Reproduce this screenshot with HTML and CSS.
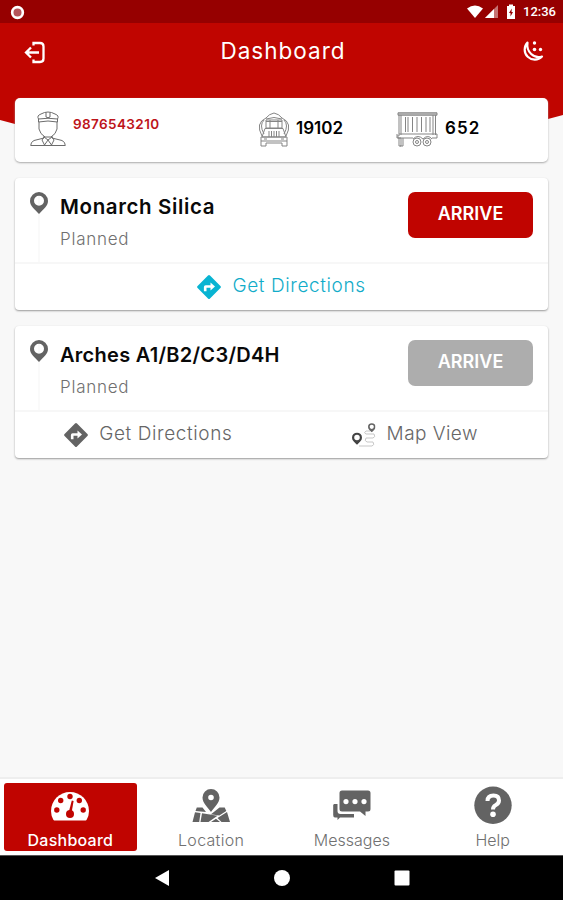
FILE: index.html
```html
<!DOCTYPE html>
<html lang="en">
<head>
<meta charset="utf-8">
<meta name="viewport" content="width=device-width, initial-scale=1">
<title>Dashboard</title>
<link rel="stylesheet" href="styles.css">
</head>
<body>
<svg width="0" height="0" class="defs" aria-hidden="true">
  <symbol id="pin" viewBox="0 0 18 22"><path fill-rule="evenodd" d="M9 0a9 9 0 0 0-9 9c0 5 4.500 8 9 13 4.500-5 9-8 9-13a9 9 0 0 0-9-9Zm0 3.800a5 5 0 1 1 0 10 5 5 0 0 1 0-10Z"/></symbol>
  <symbol id="turn" viewBox="0 0 24 24"><path fill-rule="evenodd" d="M11 .6.6 11a1.400 1.400 0 0 0 0 2L11 23.400a1.400 1.400 0 0 0 2 0L23.400 13a1.400 1.400 0 0 0 0-2L13 .6a1.400 1.400 0 0 0-2 0ZM13.500 15.500V12.800H9.500v3.500h-2.600V12q0-1.800 1.800-1.800h4.800V7.500l4.500 4Z"/></symbol>
</svg>
<main class="app">
  <header class="top">
    <div class="status">
      <svg class="record" viewBox="0 0 16 16"><circle cx="8" cy="8" r="5.700" fill="#b5545a" stroke="#fff" stroke-width="2.800"/></svg>
      <svg class="signals" viewBox="0 0 50 16" fill="#fff">
        <path d="M0 4.500Q8-1.500 16 4.500L8 14Z"/>
        <path d="M31 1v13H18Z" opacity=".45"/><path d="M27 5v9H18Z"/>
        <path fill-rule="evenodd" d="M40 2h2V.5h4V2h2v13h-8Zm4.800 2.500L42 9h1.500v3.500L46 8h-1.500Z"/>
      </svg>
      <span class="clock">12:36</span>
    </div>
    <div class="titlebar">
      <svg class="exit" viewBox="0 0 22 23" fill="none" stroke="#fff" stroke-width="2.300"><path d="M9.500 4.500V2H16q3.500 0 3.500 3.500v12q0 3.500-3.500 3.500H9.500V18.500M2 11.500h13M7 6.500l-5 5 5 5"/></svg>
      <h1>Dashboard</h1>
      <svg class="moon" viewBox="0 0 24 24" fill="none" stroke="#fff" stroke-width="2.200"><path d="M7.500 2.500A10 10 0 1 0 22 16.500C14 19 6 12 7.500 2.500Z" stroke-linejoin="round"/><g fill="#fff" stroke="none"><circle cx="14.500" cy="3" r="1.700"/><circle cx="14.500" cy="9.500" r="1.800"/><circle cx="20.500" cy="9.500" r="1.700"/></g></svg>
    </div>
    <section class="summary">
      <svg class="driver" viewBox="0 0 36 36" fill="none" stroke="#6c6c6c" stroke-width="1">
        <path d="M8.500 8Q6.500 4.500 11 3 18-1 25 3q4.500 1.500 2.500 5M8.500 8q9.500-1.500 19 0v3q-9.500-2-19 0ZM16 1.500v4.500q2 1.500 4 0V1.500M9 11v7q1 5 6 8h6q5-3 6-8v-7M14 25v2L4 29.500Q.7 31 .7 34.500h34.600Q35.300 31 32 29.500L22 27v-2M14 26l-2 3 2.500 5 3.500-5 3.500 5 2.500-5-2-3-4 3Z"/>
      </svg>
      <span class="phone">9876543210</span>
      <svg class="truck" viewBox="0 0 30 35" fill="none" stroke="#858585" stroke-width="1">
        <path d="M3 24Q-4 11 7 6q3-4 8-5 5 1 8 5 11 5 4 18M5 22Q0 13 5 8M25 22q5-9 0-14M7 7q8-3 16 0M7 8h16v8H7ZM11 8v8M19 8v8M7 9.500h16M6 16.500h18l3 8.500H3ZM10 19v6M12.500 19v6M15 19v6M17.500 19v6M20 19v6M2 25h26v4H2ZM2 29v5h5v-3h16v3h5v-5M5 27h3M22 27h3"/>
      </svg>
      <span class="number truck-no">19102</span>
      <svg class="trailer" viewBox="0 0 42 35" fill="none" stroke="#858585" stroke-width="1">
        <path d="M2 .8h39v2.400H2Z" fill="#bbb"/><path d="M3 3v21M5 3v20M9.500 5v15M12 5v15M16.500 5v15M21 5v15M25.500 5v15M30 5v15M34 5v15M37 3v20M39.500 3v20M3 22h38v4h-5M17 26H2v-3M1 22v4h4v8H3v-8M7 26v8H4M17 27q5-5 10 0 5-5 9 0"/><circle cx="21" cy="30" r="4"/><circle cx="21" cy="30" r="1.500"/><circle cx="31" cy="30" r="4"/><circle cx="31" cy="30" r="1.500"/>
      </svg>
      <span class="number trailer-no">652</span>
    </section>
  </header>

  <section class="stops">
    <article class="stop">
      <div class="details">
        <div class="rail"><svg class="pin"><use href="#pin"/></svg></div>
        <div class="place"><h2 class="silica">Monarch Silica</h2><p>Planned</p></div>
        <button class="arrive">ARRIVE</button>
      </div>
      <div class="actions single">
        <a class="action"><svg class="turn"><use href="#turn"/></svg><span class="directions">Get Directions</span></a>
      </div>
    </article>
    <article class="stop">
      <div class="details">
        <div class="rail"><svg class="pin"><use href="#pin"/></svg></div>
        <div class="place"><h2 class="arches">Arches A1/B2/C3/D4H</h2><p>Planned</p></div>
        <button class="arrive disabled">ARRIVE</button>
      </div>
      <div class="actions">
        <a class="action"><svg class="turn"><use href="#turn"/></svg><span class="directions">Get Directions</span></a>
        <a class="action map"><svg class="route" viewBox="0 0 24 24"><path d="M7 23h13q3-1 1-4h-6q-3-1-1-4h7q3-1 1-4h-8q-3-1 0-3h4" fill="none" stroke="#c7c7c7"/><use href="#pin" x="0" y="9" width="10" height="13.500" fill="#444"/><use href="#pin" x="16" y="0" width="7.500" height="9.500"/></svg><span class="mapview">Map View</span></a>
      </div>
    </article>
  </section>

  <nav class="tabs">
    <a class="tab active">
      <svg viewBox="0 0 40 38"><path d="M3.500 34Q1 30 1 25a19 19 0 0 1 38 0q0 5-2.500 9-.5.500-2 .5h-29q-1.500 0-2-.5Z" fill="#fff"/><g fill="#c00400"><circle cx="6.800" cy="24" r="2.700"/><circle cx="10.700" cy="14.500" r="2.700"/><circle cx="20" cy="10.500" r="2.700"/><circle cx="29.300" cy="14.500" r="2.700"/><circle cx="33.200" cy="24" r="2.700"/><circle cx="20" cy="28" r="4"/><path d="m18.800 26 3-11.500 1.800.5-2 11.500Z"/></g></svg>
      <span class="t-dash">Dashboard</span>
    </a>
    <a class="tab">
      <svg viewBox="0 0 40 38"><path fill-rule="evenodd" d="M20 3a8.500 8.500 0 0 0-8.500 8.500c0 5.500 5.200 9.500 8.500 14.500 3.300-5 8.500-9 8.500-14.500A8.500 8.500 0 0 0 20 3Zm0 5.700a2.800 2.800 0 1 1 0 5.600 2.800 2.800 0 0 1 0-5.600Z"/><path d="M5.800 21.500h5.700l3.500 4.500-10.500-1ZM28.500 21.500h5.200l1.600 3.500-7 4.500-14-2 5.700.8ZM4 26.300l5.500.7-1.300 9H1.500ZM11 27.200l15.500 2.600-9 6.200h-8ZM36 26l3 10h-8.500l-4-4ZM25 32.700l4 3.300h-9Z"/></svg>
      <span class="t-loc">Location</span>
    </a>
    <a class="tab">
      <svg viewBox="0 0 40 38"><path fill-rule="evenodd" d="M10 4.500h26q2.500 0 2.500 2.500v16q0 2.500-2.500 2.500h-2.500V30L28 25.500H10Q7.500 25.500 7.500 23V7q0-2.500 2.500-2.500Zm4 8.500a2.600 2.600 0 1 0 0 5.200 2.600 2.600 0 0 0 0-5.200Zm9 0a2.600 2.600 0 1 0 0 5.200 2.600 2.600 0 0 0 0-5.200Zm9 0a2.600 2.600 0 1 0 0 5.200 2.600 2.600 0 0 0 0-5.200Z"/><path d="M2 18h3.500v7q0 3 3 3H22v3.500H8L5.500 34v-2.500H3Q1.200 31.500 1.200 29V19Z"/></svg>
      <span class="t-msg">Messages</span>
    </a>
    <a class="tab">
      <svg viewBox="0 0 40 38"><circle cx="20" cy="19.300" r="18.700"/><path d="M14.500 15q0-5.500 6-5.500 5.500 0 5.500 5 0 3-3.500 4.700-2.500 1.200-2.500 4.300" fill="none" stroke="#fff" stroke-width="4"/><circle cx="20" cy="28.300" r="2.800" fill="#fff"/></svg>
      <span class="t-help">Help</span>
    </a>
  </nav>
  <footer class="system">
    <svg viewBox="0 0 16 16"><path d="M15 0v16L1 8Z"/></svg>
    <svg viewBox="0 0 16 16"><circle cx="8" cy="8" r="8"/></svg>
    <svg viewBox="0 0 16 16"><rect x=".5" y=".5" width="15" height="15" rx="1"/></svg>
  </footer>
</main>
</body>
</html>
```
FILE: styles.css
```css
* { box-sizing: border-box; margin: 0; }
body { font-family: Inter, "Liberation Sans", sans-serif; background: #f8f8f8; }
svg { display: block; flex: none; }
.defs { position: absolute; }
.app { display: flex; flex-direction: column; height: 900px; width: 563px; overflow: hidden; }
span, h1, h2, p { white-space: nowrap; }

.top { position: relative; height: 162px; display: flex; flex-direction: column; }
.top::before { content: ""; position: absolute; inset: 0; z-index: -1; background: #c00500; clip-path: polygon(0 0, 100% 0, 100% 115px, 548px 119px, 500px 130px, 60px 134px, 15px 124px, 0 120px); }
.status { height: 23px; background: #960000; display: flex; align-items: center; padding: 1px 7px 0 10px; }
.record { width: 15px; height: 15px; }
.signals { width: 50px; height: 16px; margin-left: auto; }
.clock { font: 500 13px/16px Roboto, sans-serif; color: #fff; width: 33px; margin-left: 6px; }
.titlebar { height: 75px; display: flex; justify-content: space-between; align-items: flex-start; padding: 0 19px 0 24px; color: #fff; }
.exit { width: 22px; height: 23px; margin-top: 18px; }
h1 { font-size: 22.500px; line-height: 28px; font-weight: 400; margin: 14px 0 0; letter-spacing: 1px; }
.moon { width: 24px; height: 24px; margin-top: 17px; }
.summary { height: 64px; margin: 0 15px; background: #fff; border-radius: 5px; box-shadow: 0 1px 2px #aaa; display: flex; align-items: flex-start; padding-top: 14px; }
.driver { width: 36px; height: 36px; margin: -1px 0 0 15px; }
.phone { color: #bd141a; font-size: 13.500px; font-weight: 600; line-height: 20px; margin: 2px 0 0 7px; width: 187px; letter-spacing: .4px; }
.truck { width: 30px; height: 35px; margin: 0 0 0 -1px; }
.number { font-size: 17px; line-height: 22px; font-weight: 600; margin-top: 5px; }
.truck-no { margin-left: 7px; width: 100px; }
.trailer { width: 42px; height: 35px; }
.trailer-no { margin-left: 7px; letter-spacing: 1.100px; }

.stops { flex: 1; padding: 16px 15px 0; display: flex; flex-direction: column; gap: 16px; }
.stop { height: 132px; background: #fff; border-radius: 4px; box-shadow: 0 1px 2px #999; }
.details { height: 86px; display: flex; align-items: flex-start; padding: 14px 15px 0; border-bottom: 2px solid #f7f7f7; }
.rail { width: 18px; height: 70px; margin-left: 0; background: linear-gradient(90deg, transparent 8px, #fafafa 8px 10px, transparent 10px); }
.pin { width: 18px; height: 22px; fill: #636363; }
.place { margin-left: 12px; }
h2 { font-size: 20px; font-weight: 600; line-height: 30px; color: #090909; }
.silica { font-size: 20.500px; letter-spacing: .63px; }
.arches { letter-spacing: .28px; }
.place p { font-size: 17px; line-height: 24px; margin-top: 5px; color: #707070; font-weight: 300; letter-spacing: .75px; }
.arrive { margin-left: auto; width: 125px; height: 46px; border: 0; border-radius: 7px; background: #c00400; color: #fff; font: 600 18px/22px Inter, sans-serif; padding: 0 0 3px; }
.arrive.disabled { background: #adadad; }
.actions { height: 46px; display: grid; grid-template-columns: 1fr 1fr; font-size: 19px; font-weight: 300; color: #666; }
.actions.single { grid-template-columns: 1fr; color: #12acc9; }
.action { display: flex; align-items: center; justify-content: center; gap: 11px; padding-bottom: 4px; }
.turn { width: 24px; height: 24px; fill: #636363; margin-top: 3px; }
.single .turn { fill: #08b4d2; }
.directions { letter-spacing: .6px; }
.mapview { letter-spacing: .45px; }
.route { width: 24px; height: 24px; margin-top: 3px; fill: #666; }

.tabs { height: 78px; background: #fff; border-top: 2px solid #eee; display: grid; grid-template-columns: repeat(4, 1fr); padding-bottom: 4px; }
.tab { margin: 4px 4px 0; border-radius: 3px; display: flex; flex-direction: column; align-items: center; fill: #636363; color: #707070; font-size: 16px; font-weight: 300; line-height: 20px; }
.tab svg { width: 40px; height: 38px; margin-top: 3px; }
.tab span { margin-top: 6px; }
.t-loc { letter-spacing: .3px; }
.tab.active { background: #c00400; color: #fff; font-weight: 500; }
.t-dash { letter-spacing: .25px; }
.system { height: 45px; background: #000; border-top: 1px solid #555; display: flex; align-items: center; justify-content: center; gap: 104px; }
.system svg { width: 16px; height: 16px; fill: #fff; }
```
